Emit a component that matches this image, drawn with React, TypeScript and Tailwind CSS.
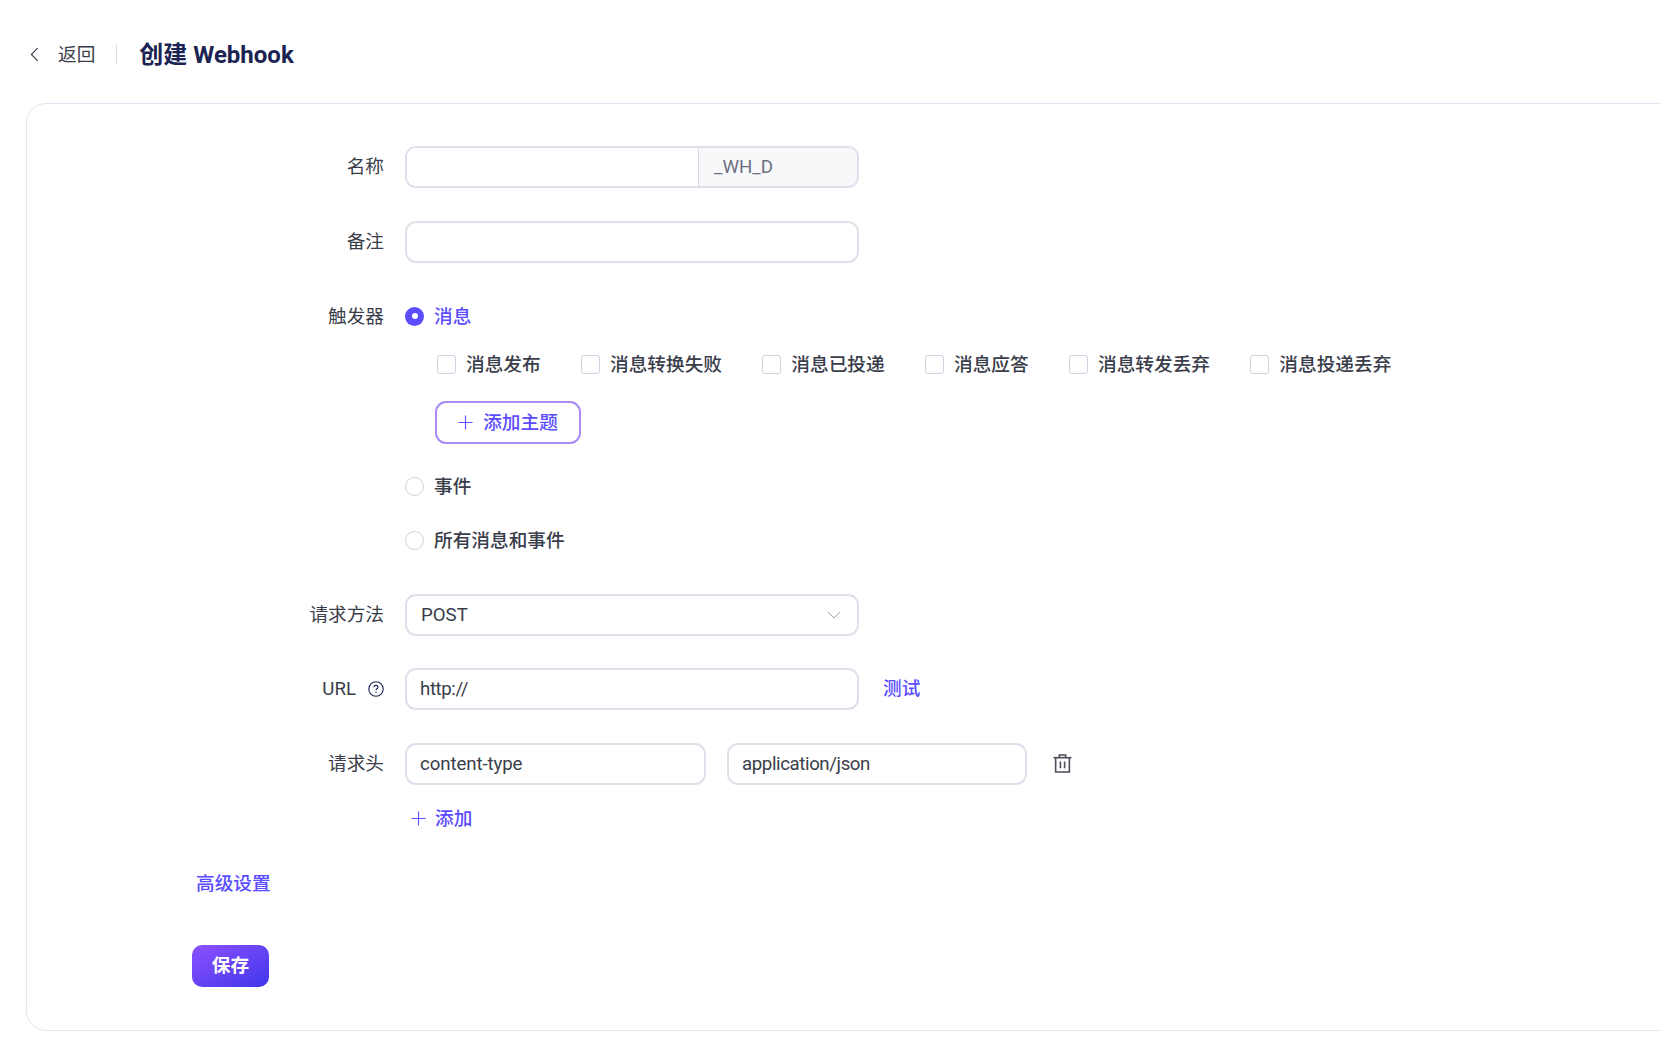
import React from 'react';

const fontStack = 'font-["Roboto","Noto_Sans_CJK_SC",sans-serif]';

const FormRow = ({ label, className, children }: { label: React.ReactNode; className?: string; children: React.ReactNode }) => (
  <div className={`flex items-start ${className ?? ''}`}>
    <div className="w-[357px] h-[28px] flex items-center justify-end text-[18.67px] text-[#3a3d4a] shrink-0">{label}</div>
    <div className="ml-[21px] flex-1 min-w-0">{children}</div>
  </div>
);

const TextInput = ({ value, className }: { value?: string; className?: string }) => (
  <input
    readOnly
    value={value ?? ''}
    className={`h-[42px] px-[13px] border-2 border-[#dfe1ea] rounded-[11px] text-[18.67px] text-[#3a3d4a] bg-white outline-none ${className ?? ''}`}
  />
);

const Radio = ({ checked, label, className }: { checked?: boolean; label: string; className?: string }) => (
  <div className={`flex items-center h-[28px] ${className ?? ''}`}>
    {checked ? (
      <span className="w-[19px] h-[19px] rounded-full bg-[#5b4dff] flex items-center justify-center">
        <span className="w-[6px] h-[6px] rounded-full bg-white" />
      </span>
    ) : (
      <span className="w-[19px] h-[19px] rounded-full border border-[#cfd2de] bg-white" />
    )}
    <span className={`ml-[10px] pt-[2px] text-[18.67px] font-medium ${checked ? 'text-[#5b4dff]' : 'text-[#3a3d4a]'}`}>{label}</span>
  </div>
);

const Check = ({ label }: { label: string }) => (
  <div className="flex items-center h-[28px] mr-[40.4px]">
    <span className="w-[19px] h-[19px] rounded-[3px] border border-[#cfd2de] bg-white" />
    <span className="ml-[10px] pt-[2px] text-[18.67px] font-medium text-[#3a3d4a]">{label}</span>
  </div>
);

const PlusIcon = ({ className }: { className?: string }) => (
  <svg viewBox="0 0 16 16" className={className} fill="none" stroke="currentColor" strokeWidth="1.2">
    <path d="M8 0.5V15.5M0.5 8H15.5" />
  </svg>
);

export default function App() {
  return (
    <div className={`${fontStack} w-[1661px] h-[1048px] overflow-hidden bg-white`}>
      <header className="flex items-center h-[28px] pt-[1px] mt-[40px] ml-[30px]">
        <svg viewBox="0 0 10 16" className="w-[9px] h-[15px] mb-[1px] text-[#3a3d4a]" fill="none" stroke="currentColor" strokeWidth="1.2">
          <path d="M8.5 1L1.5 8L8.5 15" />
        </svg>
        <span className="ml-[19px] pt-[1px] text-[18.67px] text-[#3a3d4a]">返回</span>
        <span className="ml-[21px] w-px h-[19px] bg-[#d9dbe4]" />
        <h1 className="ml-[22px] pt-[1px] text-[24px] font-bold text-[#1a2352] whitespace-nowrap">创建 Webhook</h1>
      </header>

      <main className="mt-[35px] ml-[26px] w-[1700px] border border-[#e4e4f2] rounded-[20px] pt-[42px] pb-[43px]">
        <FormRow label="名称" className="[&>div:first-child]:h-[42px]">
          <div className="flex w-[454px] h-[42px] border-2 border-[#dfe1ea] rounded-[11px] overflow-hidden">
            <div className="w-[291px] bg-white" />
            <div className="flex-1 flex items-center pl-[15px] border-l border-[#d5d8e3] bg-[#f7f8fa] text-[18.67px] text-[#6b7080]">_WH_D</div>
          </div>
        </FormRow>

        <FormRow label="备注" className="mt-[33px] [&>div:first-child]:h-[42px]">
          <TextInput className="w-[454px] block" />
        </FormRow>

        <FormRow label={<span className="pt-[2px]">触发器</span>} className="mt-[39px]">
          <Radio checked label="消息" />
          <div className="flex mt-[20px] ml-[32px]">
            <Check label="消息发布" />
            <Check label="消息转换失败" />
            <Check label="消息已投递" />
            <Check label="消息应答" />
            <Check label="消息转发丢弃" />
            <Check label="消息投递丢弃" />
          </div>
          <button className="mt-[23px] ml-[30px] w-[146px] h-[43px] flex items-center justify-center border-2 border-[#a98cf7] rounded-[11px] text-[18.67px] font-medium text-[#5b4dff]">
            <PlusIcon className="w-[15px] h-[15px] mr-[10px]" />
            添加主题
          </button>
          <Radio label="事件" className="mt-[28px]" />
          <Radio label="所有消息和事件" className="mt-[26px]" />
        </FormRow>

        <FormRow label="请求方法" className="mt-[40px] [&>div:first-child]:h-[42px]">
          <div className="w-[454px] h-[42px] flex items-center justify-between pl-[14px] pr-[16px] border-2 border-[#dfe1ea] rounded-[11px] text-[18.67px] text-[#3a3d4a]">
            POST
            <svg viewBox="0 0 14 8" className="w-[14px] h-[8px] text-[#9a9daa]" fill="none" stroke="currentColor" strokeWidth="1">
              <path d="M1 1L7 7L13 1" />
            </svg>
          </div>
        </FormRow>

        <FormRow
          className="mt-[32px] [&>div:first-child]:h-[42px]"
          label={
            <>
              URL
              <svg viewBox="0 0 16 16" className="ml-[12px] w-[16px] h-[16px] text-[#1a2352]" fill="none" stroke="currentColor" strokeWidth="1.1">
                <circle cx="8" cy="8" r="7.2" />
                <path d="M6 6.3C6 5.1 6.9 4.4 8 4.4C9.1 4.4 10 5.1 10 6.1C10 7.5 8 7.5 8 9.3" />
                <path d="M8 10.8V11.9" />
              </svg>
            </>
          }
        >
          <div className="flex items-center">
            <TextInput value="http://" className="w-[454px] tracking-[-0.4px]" />
            <span className="ml-[24px] text-[18.67px] font-medium text-[#5b4dff]">测试</span>
          </div>
        </FormRow>

        <FormRow label="请求头" className="mt-[33px] [&>div:first-child]:h-[42px]">
          <div className="flex items-center">
            <TextInput value="content-type" className="w-[301px] tracking-[-0.1px]" />
            <TextInput value="application/json" className="ml-[21px] w-[300px] tracking-[-0.4px]" />
            <svg viewBox="0 0 18 18" className="ml-[26px] mb-[1px] w-[19px] h-[19px] text-[#4a4d5a]" fill="none" stroke="currentColor" strokeWidth="1.5">
              <path d="M0.5 3.5H17.5" />
              <path d="M6 3.5V1H12V3.5" />
              <path d="M2.5 3.5V17H15.5V3.5" />
              <path d="M7 7V13.5M11 7V13.5" />
            </svg>
          </div>
          <div className="flex items-center h-[28px] pt-[1px] mt-[19px] ml-[6px] text-[18.67px] font-medium text-[#5b4dff]">
            <PlusIcon className="w-[15px] h-[15px] mr-[9px]" />
            添加
          </div>
        </FormRow>

        <div className="mt-[37px] ml-[169px] h-[28px] leading-[30px] text-[18.67px] font-medium text-[#5b4dff]">高级设置</div>

        <button className="block mt-[48px] ml-[165px] w-[77px] h-[42px] rounded-[10px] bg-gradient-to-br from-[#8d4fff] to-[#3f35ea] text-[18.67px] font-semibold text-white">
          保存
        </button>
      </main>
    </div>
  );
}
